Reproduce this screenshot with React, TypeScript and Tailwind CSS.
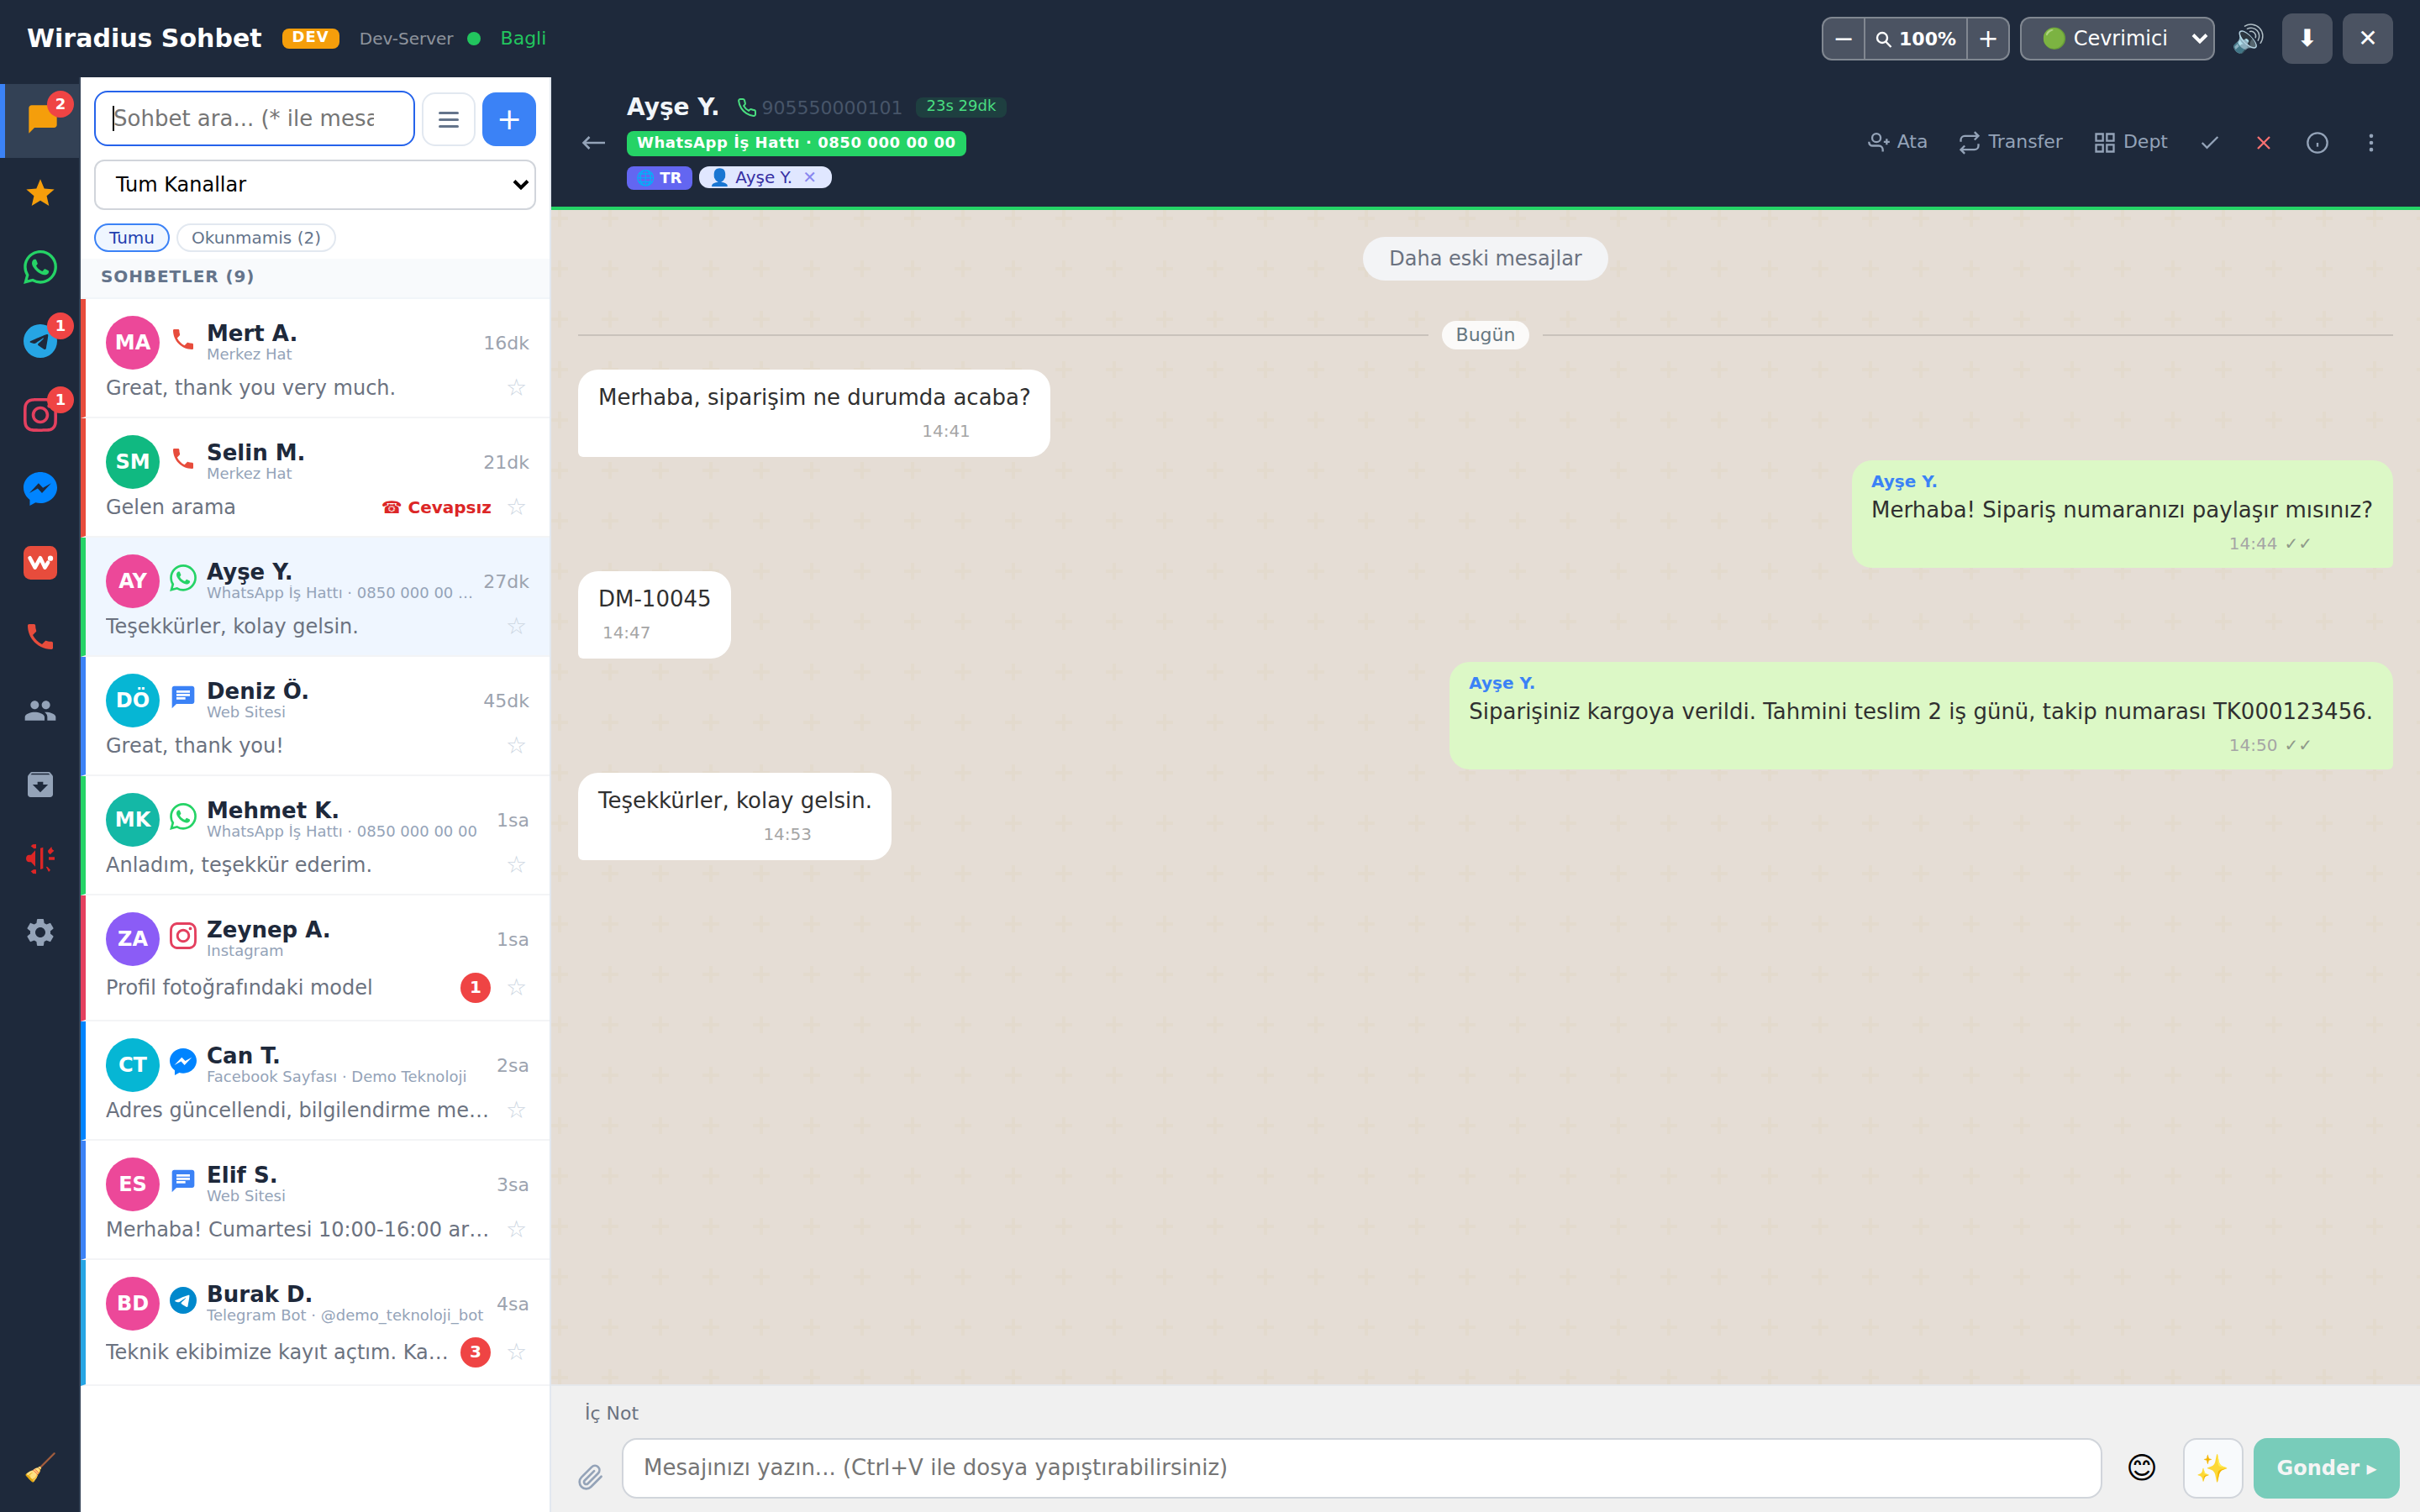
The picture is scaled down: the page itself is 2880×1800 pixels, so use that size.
import React from 'react';
import { MdArchive, MdChat, MdChatBubble, MdPeople, MdPhone, MdSettings, MdStar } from 'react-icons/md';
import { SiInstagram, SiTelegram, SiWhatsapp } from 'react-icons/si';
import clsx from 'clsx';

type IconProps = { className?: string };

const MessengerIcon = ({ className }: IconProps) => (
  <svg viewBox="0 0 24 24" fill="currentColor" className={className}>
    <path d="M12 0C5.373 0 0 4.975 0 11.111c0 3.497 1.745 6.616 4.472 8.652V24l4.086-2.242c1.09.301 2.246.464 3.442.464 6.627 0 12-4.974 12-11.111C24 4.975 18.627 0 12 0zm1.193 14.963l-3.056-3.259-5.963 3.259 6.559-6.963 3.13 3.259 5.889-3.259-6.559 6.963z" />
  </svg>
);

const WiradiusIcon = ({ className }: IconProps) => (
  <svg viewBox="0 0 24 24" className={className}>
    <rect width="24" height="24" rx="5" fill="#e74c3c" />
    <path d="M4.5 8.5 8.2 15.4 12 8.5l3.3 6.9 2.2-3.6" fill="none" stroke="#fff" strokeWidth="2.7" strokeLinecap="round" strokeLinejoin="round" />
    <circle cx="19.2" cy="8.8" r="1.9" fill="#fff" />
  </svg>
);

const AlarmIcon = ({ className }: IconProps) => (
  <svg viewBox="0 0 24 24" fill="currentColor" className={className}>
    <path d="M8.4 6.2v11.6l-3-3.2H4C2.6 14.6 1.8 13.4 1.8 12S2.6 9.4 4 9.4h1.4z" />
    <path d="M12 4.6 14 4v15.2l-2 .6z" />
    <path d="M5.2 3.2 6.6 2 9 1.8v3L7.4 5zM5.2 21.2l2.2-1.4 1.6.2v3l-2.2-.2z" />
    <path d="M17.4 6.4 20 3.6l.4 1.8 1.4 1L19 9.2l-1.4-1.4zM18 11h4.2v2H18zM16 17.8l1.2.2 2 2.2-1.2 1.4z" />
  </svg>
);

const ChevronIcon = ({ className }: IconProps) => (
  <svg viewBox="0 0 20 14" fill="none" stroke="currentColor" strokeWidth="4" className={className}>
    <path d="M2 2.5l8 8 8-8" />
  </svg>
);

const LineIcon = ({ className, children }: IconProps & { children: React.ReactNode }) => (
  <svg viewBox="0 0 24 24" fill="none" stroke="currentColor" strokeWidth="2" className={clsx('h-7 w-7 shrink-0', className)}>
    {children}
  </svg>
);

const rail = [
  { icon: MdChatBubble, color: 'text-[#f59e0b]', badge: 2, active: true },
  { icon: MdStar, color: 'text-[#f59e0b]' },
  { icon: SiWhatsapp, color: 'text-[#25d366]' },
  { icon: SiTelegram, color: 'text-[#26a5e4]', badge: 1 },
  { icon: SiInstagram, color: 'text-[#e4405f]', badge: 1 },
  { icon: MessengerIcon, color: 'text-[#0084ff]' },
  { icon: WiradiusIcon, color: '' },
  { icon: MdPhone, color: 'text-[#e74c3c]' },
  { icon: MdPeople, color: 'text-[#94a3b8]' },
  { icon: MdArchive, color: 'text-[#94a3b8]' },
  { icon: AlarmIcon, color: 'text-[#dc2626]' },
  { icon: MdSettings, color: 'text-[#94a3b8]' },
];

type Chat = {
  initials: string;
  name: string;
  channel: string;
  time: string;
  preview: string;
  avatar: string;
  border: string;
  icon: React.ComponentType<IconProps>;
  iconColor: string;
  unread?: number;
  missed?: boolean;
  selected?: boolean;
};

const chats: Chat[] = [
  { initials: 'MA', name: 'Mert A.', channel: 'Merkez Hat', time: '16dk', preview: 'Great, thank you very much.', avatar: 'bg-[#ec4899]', border: 'border-l-[#e74c3c]', icon: MdPhone, iconColor: 'text-[#e74c3c]' },
  { initials: 'SM', name: 'Selin M.', channel: 'Merkez Hat', time: '21dk', preview: 'Gelen arama', avatar: 'bg-[#10b981]', border: 'border-l-[#e74c3c]', icon: MdPhone, iconColor: 'text-[#e74c3c]', missed: true },
  { initials: 'AY', name: 'Ayşe Y.', channel: 'WhatsApp İş Hattı · 0850 000 00 00', time: '27dk', preview: 'Teşekkürler, kolay gelsin.', avatar: 'bg-[#ec4899]', border: 'border-l-[#25d366]', icon: SiWhatsapp, iconColor: 'text-[#25d366]', selected: true },
  { initials: 'DÖ', name: 'Deniz Ö.', channel: 'Web Sitesi', time: '45dk', preview: 'Great, thank you!', avatar: 'bg-[#06b6d4]', border: 'border-l-[#3b82f6]', icon: MdChat, iconColor: 'text-[#3b82f6]' },
  { initials: 'MK', name: 'Mehmet K.', channel: 'WhatsApp İş Hattı · 0850 000 00 00', time: '1sa', preview: 'Anladım, teşekkür ederim.', avatar: 'bg-[#14b8a6]', border: 'border-l-[#25d366]', icon: SiWhatsapp, iconColor: 'text-[#25d366]' },
  { initials: 'ZA', name: 'Zeynep A.', channel: 'Instagram', time: '1sa', preview: 'Profil fotoğrafındaki model', avatar: 'bg-[#8b5cf6]', border: 'border-l-[#e4405f]', icon: SiInstagram, iconColor: 'text-[#e4405f]', unread: 1 },
  { initials: 'CT', name: 'Can T.', channel: 'Facebook Sayfası · Demo Teknoloji', time: '2sa', preview: 'Adres güncellendi, bilgilendirme mesajı gönderildi.', avatar: 'bg-[#06b6d4]', border: 'border-l-[#0084ff]', icon: MessengerIcon, iconColor: 'text-[#0084ff]' },
  { initials: 'ES', name: 'Elif S.', channel: 'Web Sitesi', time: '3sa', preview: 'Merhaba! Cumartesi 10:00-16:00 arası açığız.', avatar: 'bg-[#ec4899]', border: 'border-l-[#3b82f6]', icon: MdChat, iconColor: 'text-[#3b82f6]' },
  { initials: 'BD', name: 'Burak D.', channel: 'Telegram Bot · @demo_teknoloji_bot', time: '4sa', preview: 'Teknik ekibimize kayıt açtım. Kayıt numaranız', avatar: 'bg-[#ec4899]', border: 'border-l-[#26a5e4]', icon: SiTelegram, iconColor: 'text-[#0088cc]', unread: 3 },
];

const messages = [
  { text: 'Merhaba, siparişim ne durumda acaba?', time: '14:41' },
  { text: 'Merhaba! Sipariş numaranızı paylaşır mısınız?', time: '14:44', sender: 'Ayşe Y.' },
  { text: 'DM-10045', time: '14:47' },
  { text: 'Siparişiniz kargoya verildi. Tahmini teslim 2 iş günü, takip numarası TK000123456.', time: '14:50', sender: 'Ayşe Y.' },
  { text: 'Teşekkürler, kolay gelsin.', time: '14:53' },
];

const TopBar = () => (
  <header className="flex h-[92px] shrink-0 items-center justify-between bg-[#1e293b] px-8 text-white">
    <div className="flex items-center">
      <h1 className="text-[30px] leading-10 font-bold">Wiradius Sohbet</h1>
      <span className="ml-6 h-6 rounded-[8px] bg-[#f59e0b] px-3 text-[18px] leading-5 font-bold tracking-[1px]">DEV</span>
      <span className="ml-6 pb-px text-[20px] leading-6 text-white/50">Dev-Server</span>
      <span className="ml-4 h-4 w-4 rounded-full bg-[#22c55e]" />
      <span className="ml-6 text-[22px] leading-6 text-[#22c55e]">Bagli</span>
    </div>
    <div className="flex items-center gap-3">
      <div className="flex h-[52px] w-[224px] overflow-hidden rounded-[12px] border-2 border-white/30 bg-white/20">
        <button className="w-12 text-[30px] leading-[46px]">−</button>
        <div className="flex flex-1 items-center justify-center gap-2 border-x-2 border-white/30 text-[22px] font-bold">
          <svg viewBox="0 0 20 20" fill="none" stroke="currentColor" strokeWidth="2.4" className="mt-0.5 h-5 w-5">
            <circle cx="8" cy="8" r="6" />
            <path d="M12.2 12.5 18.5 19" />
          </svg>
          100%
        </div>
        <button className="w-12 text-[30px] leading-[46px]">+</button>
      </div>
      <div className="flex h-[52px] w-[232px] items-center justify-between rounded-[12px] border-2 border-white/30 bg-white/20 pr-1.5 pl-6 text-[24px] leading-[46px]">
        <span className="whitespace-nowrap">🟢 Cevrimici</span>
        <ChevronIcon className="h-3.5 w-5" />
      </div>
      <button className="h-14 w-14 text-[32px] leading-[52px]">🔊</button>
      <button className="h-[60px] w-[60px] rounded-[12px] bg-white/20 text-[28px] leading-[60px] font-bold">⬇</button>
      <button className="h-[60px] w-[60px] rounded-[12px] bg-white/20 text-[28px] leading-[60px]">✕</button>
    </div>
  </header>
);

const Rail = () => (
  <nav className="flex w-24 shrink-0 flex-col border-r-2 border-[#334155] bg-[#1e293b] pt-2">
    {rail.map((item, i) => (
      <div key={i} className={clsx('relative flex h-[88px] w-24 justify-center pt-[22px]', item.active && 'border-l-[6px] border-[#3b82f6] bg-[#334155]')}>
        <item.icon className={clsx('h-10 w-10', item.color)} />
        {item.badge && (
          <span className="absolute top-2 right-2 h-8 w-8 rounded-full bg-[#ef4444] text-center text-[18px] leading-8 font-bold text-white">{item.badge}</span>
        )}
      </div>
    ))}
    <div className="mt-auto mb-[31px] w-24 text-center text-[32px] leading-[44px]">🧹</div>
  </nav>
);

const ChatRow = ({ chat }: { chat: Chat }) => (
  <div className={clsx('border-b-2 border-l-[6px] border-b-[#f3f4f6] py-5 pr-6 pl-6', chat.border, chat.selected ? 'bg-[#eff6ff]' : 'bg-white')}>
    <div className="flex h-16 items-center gap-3">
      <div className={clsx('flex h-16 w-16 shrink-0 items-center justify-center rounded-full text-[24px] font-bold text-white', chat.avatar)}>{chat.initials}</div>
      <chat.icon className={clsx('mb-2 h-8 w-8 shrink-0', chat.iconColor)} />
      <div className="min-w-0 flex-1 pb-px">
        <div className="truncate text-[26px] leading-[30px] font-bold text-[#1e293b]">{chat.name}</div>
        <div className="mt-px truncate pb-0.5 text-[18px] leading-[18px] text-[#94a3b8]">{chat.channel}</div>
      </div>
      <span className="text-[22px] text-[#9ca3af]">{chat.time}</span>
    </div>
    <div className={clsx('mt-2 flex items-center', chat.unread ? 'h-9' : 'h-7')}>
      <p className="min-w-0 flex-1 truncate text-[24px] leading-7 text-[#6b7280]">{chat.preview}</p>
      {chat.missed && <span className="-mr-px ml-3 text-[20px] leading-6 font-bold text-[#dc2626]">☎ Cevapsız</span>}
      {chat.unread && <span className="ml-3 h-9 w-9 rounded-full bg-[#ef4444] text-center text-[20px] leading-[34px] font-bold text-white">{chat.unread}</span>}
      <span className="ml-[18px] w-7 text-[28px] leading-7 text-[#cbd5e1]">☆</span>
    </div>
  </div>
);

const Sidebar = () => (
  <aside className="flex w-[560px] shrink-0 flex-col border-r-2 border-[#e2e8f0] bg-white">
    <div className="flex items-end gap-2 px-4 pt-4">
      <div className="flex h-[66px] w-[382px] items-center rounded-[16px] border-2 border-[#2563eb] pr-[47px] pl-5">
        <span className="-mr-px h-[30px] w-0.5 shrink-0 bg-black" />
        <span className="overflow-hidden text-[26px] leading-9 whitespace-nowrap text-[#757575]">Sohbet ara... (* ile mesajlarda)</span>
      </div>
      <button className="flex h-16 w-16 flex-col items-center justify-center gap-[5px] rounded-[16px] border-2 border-[#e2e8f0]">
        <span className="h-[3px] w-6 rounded bg-[#64748b]" />
        <span className="h-[3px] w-6 rounded bg-[#64748b]" />
        <span className="h-[3px] w-6 rounded bg-[#64748b]" />
      </button>
      <button className="h-16 w-16 rounded-[16px] bg-[#3b82f6] text-[36px] leading-[62px] text-white">+</button>
    </div>
    <div className="mx-4 mt-4 flex h-[60px] items-center justify-between rounded-[12px] border-2 border-[#d1d5db] pr-1.5 pl-6 text-[24px] text-black">
      <span>Tum Kanallar</span>
      <ChevronIcon className="h-3.5 w-5" />
    </div>
    <div className="mt-4 flex gap-2 px-4 text-[20px] leading-[30px]">
      <button className="rounded-full border-2 border-[#3b82f6] bg-[#eff6ff] px-4 text-[#1e40af]">Tumu</button>
      <button className="rounded-full border-2 border-[#e2e8f0] bg-white px-4 text-[#64748b]">Okunmamis (2)</button>
    </div>
    <div className="mt-2 h-12 border-b-2 border-[#f1f5f9] bg-[#f8fafc] px-6 text-[20px] leading-[42px] font-bold tracking-[0.9px] text-[#64748b]">SOHBETLER (9)</div>
    {chats.map((chat) => (
      <ChatRow key={chat.name} chat={chat} />
    ))}
  </aside>
);

const ChatHeader = () => (
  <div className="flex h-[158px] shrink-0 items-center justify-between border-b-4 border-[#25d366] bg-[#1e293b] pr-7 pl-9 text-[#94a3b8]">
    <div className="flex items-center">
      <svg viewBox="0 0 28 18" fill="none" stroke="currentColor" strokeWidth="2.6" className="mt-0.5 h-[18px] w-7">
        <path d="M28 9H3M9.5 2 2.5 9l7 7" />
      </svg>
      <div className="ml-[26px] pb-0.5">
        <div className="flex h-9 items-center">
          <h2 className="text-[28px] leading-9 font-bold text-[#f1f5f9]">Ayşe Y.</h2>
          <LineIcon className="ml-5 h-[24px]! w-[24px]! text-[#4ade80]">
            <path strokeLinejoin="round" d="M22 16.92v3a2 2 0 0 1-2.18 2 19.79 19.79 0 0 1-8.63-3.07 19.5 19.5 0 0 1-6-6 19.79 19.79 0 0 1-3.07-8.67A2 2 0 0 1 4.11 2h3a2 2 0 0 1 2 1.72c.127.96.361 1.903.7 2.81a2 2 0 0 1-.45 2.11L8.09 9.91a16 16 0 0 0 6 6l1.27-1.27a2 2 0 0 1 2.11-.45c.907.339 1.85.573 2.81.7A2 2 0 0 1 22 16.92z" />
          </LineIcon>
          <span className="ml-1.5 text-[22px] text-[#475569]">905550000101</span>
          <span className="ml-[15px] h-6 rounded-[8px] bg-[#22c55e]/15 px-[13px] text-[18px] leading-5 text-[#4ade80]">23s 29dk</span>
        </div>
        <div className="mt-2.5 flex">
          <span className="h-[30px] w-[404px] rounded-[8px] bg-[#25d366] pl-3 text-[18px] leading-7 font-bold tracking-[0.57px] whitespace-nowrap text-white">WhatsApp İş Hattı · 0850 000 00 00</span>
        </div>
        <div className="mt-3 flex items-start gap-2">
          <span className="h-7 w-[78px] rounded-[8px] bg-[#6366f1] pl-[11px] text-[18px] leading-7 font-bold whitespace-nowrap text-white">🌐 TR</span>
          <span className="flex h-[26px] w-[158px] items-center rounded-[12px] bg-[#e0e7ff] pl-3 text-[20px] leading-[26px] whitespace-nowrap text-[#3730a3]">
            👤 Ayşe Y.<span className="ml-3 text-[#4f46e5] opacity-60">✕</span>
          </span>
        </div>
      </div>
    </div>
    <div className="flex items-center gap-1 pt-0.5 text-[22px] leading-7">
      <button className="flex items-center gap-2 px-4">
        <LineIcon>
          <path d="M16 21v-2a4 4 0 0 0-4-4H5.5A3.5 3.5 0 0 1 2 11.5V11M20 8v6M23 11h-6" />
          <circle cx="9.5" cy="7" r="4.3" />
        </LineIcon>
        <span className="pb-[3px]">Ata</span>
      </button>
      <button className="flex items-center gap-2 px-4">
        <LineIcon>
          <path d="M17 1l4 4-4 4M3 11V9a4 4 0 0 1 4-4h14M7 23l-4-4 4-4M21 13v2a4 4 0 0 1-4 4H3" />
        </LineIcon>
        <span className="pb-[3px]">Transfer</span>
      </button>
      <button className="flex items-center gap-2 px-4">
        <LineIcon>
          <path d="M3 3h7v7H3zM14 3h7v7h-7zM14 14h7v7h-7zM3 14h7v7H3z" />
        </LineIcon>
        <span className="pb-[3px]">Dept</span>
      </button>
      <button className="px-4">
        <LineIcon>
          <path d="M20 6 9 17l-5-5" />
        </LineIcon>
      </button>
      <button className="px-4 text-[#f87171]">
        <LineIcon>
          <path d="M18 6 6 18M6 6l12 12" />
        </LineIcon>
      </button>
      <button className="px-4">
        <LineIcon>
          <circle cx="12" cy="12" r="10" />
          <path d="M12 12v4" />
        </LineIcon>
      </button>
      <button className="px-4">
        <LineIcon>
          <circle cx="12" cy="5" r="1" />
          <circle cx="12" cy="12" r="1" />
          <circle cx="12" cy="19" r="1" />
        </LineIcon>
      </button>
    </div>
  </div>
);

const PlusPattern = () => (
  <svg className="absolute inset-0 h-full w-full">
    <defs>
      <pattern id="plus" width="60" height="60" patternUnits="userSpaceOnUse">
        <path d="M8 0h4v8h8v4h-8v8H8v-8H0V8h8z" fill="#d4c896" fillOpacity="0.13" />
      </pattern>
    </defs>
    <rect width="100%" height="100%" fill="url(#plus)" />
  </svg>
);

const Messages = () => (
  <div className="relative flex-1 bg-[#e5ddd5]">
    <PlusPattern />
    <div className="relative flex flex-col px-8 pt-8">
      <button className="h-[52px] self-center rounded-full bg-[#f3f4f6] px-[31px] text-[24px] leading-[51px] text-[#6b7280]">Daha eski mesajlar</button>
      <div className="mt-12 mb-6 flex items-center gap-4">
        <span className="h-0.5 flex-1 bg-black/12" />
        <span className="h-[34px] rounded-full bg-white/85 px-[17px] text-[22px] leading-[33px] text-[#667781]">Bugün</span>
        <span className="h-0.5 flex-1 bg-black/12" />
      </div>
      <div className="flex flex-col gap-1">
        {messages.map((m) => (
          <div
            key={m.time}
            className={clsx(
              'rounded-[24px]',
              m.sender ? 'h-32 self-end rounded-br-[6px] bg-[#dcf8c6] pt-[13px] pr-6 pl-[23px]' : 'h-[104px] self-start rounded-bl-[6px] bg-white pt-[15px] pr-[23px] pl-6',
            )}
          >
            {m.sender && <div className="mb-1 text-[20px] leading-6 font-bold text-[#3b82f6]">{m.sender}</div>}
            <p className="text-[26px] leading-9 text-[#303030]">{m.text}</p>
            <div className="mt-2.5 pr-[72px] text-right text-[20px] leading-6 whitespace-nowrap text-[#a5a5a5]">
              {m.time}
              {m.sender && <span className="ml-2 text-[#8f9a8a]">✓✓</span>}
            </div>
          </div>
        ))}
      </div>
    </div>
  </div>
);

const Composer = () => (
  <div className="h-[152px] shrink-0 border-t-2 border-[#e5e7eb] bg-[#f0f0f0] pr-6 pl-8">
    <div className="pt-[19px] pl-2 text-[22px] leading-7 text-[#6b7280]">İç Not</div>
    <div className="mt-[15px] flex h-[72px] items-center">
      <svg viewBox="0 0 24 24" fill="none" stroke="#94a3b8" strokeWidth="2" strokeLinecap="round" strokeLinejoin="round" className="mt-[22px] -ml-px h-8 w-8">
        <path d="M21.44 11.05l-9.19 9.19a6 6 0 0 1-8.49-8.49l9.19-9.19a4 4 0 0 1 5.66 5.66l-9.2 9.19a2 2 0 0 1-2.83-2.83l8.49-8.48" />
      </svg>
      <div className="ml-[21px] h-[72px] flex-1 rounded-[18px] border-2 border-[#d1d5db] bg-white px-6 text-[26px] leading-[66px] text-[#757575]">Mesajınızı yazın... (Ctrl+V ile dosya yapıştırabilirsiniz)</div>
      <button className="ml-3 h-[72px] w-[70px] text-[36px] leading-[72px] text-black">😊</button>
      <button className="ml-3.5 h-[72px] w-[72px] rounded-[16px] border-2 border-[#d1d5db] bg-[#f8fafc] pr-0.5 text-[32px] leading-[68px]">✨</button>
      <button className="ml-3 h-[72px] w-[174px] rounded-[16px] bg-[#78ccba] text-[24px] leading-[71px] font-bold text-[#f5f5f5]">Gonder ▸</button>
    </div>
  </div>
);

export default function App() {
  return (
    <div className="flex h-[1800px] w-[2880px] flex-col overflow-hidden bg-white font-['DejaVu_Sans',sans-serif]">
      <TopBar />
      <div className="flex min-h-0 flex-1">
        <Rail />
        <Sidebar />
        <main className="flex min-w-0 flex-1 flex-col">
          <ChatHeader />
          <Messages />
          <Composer />
        </main>
      </div>
    </div>
  );
}
